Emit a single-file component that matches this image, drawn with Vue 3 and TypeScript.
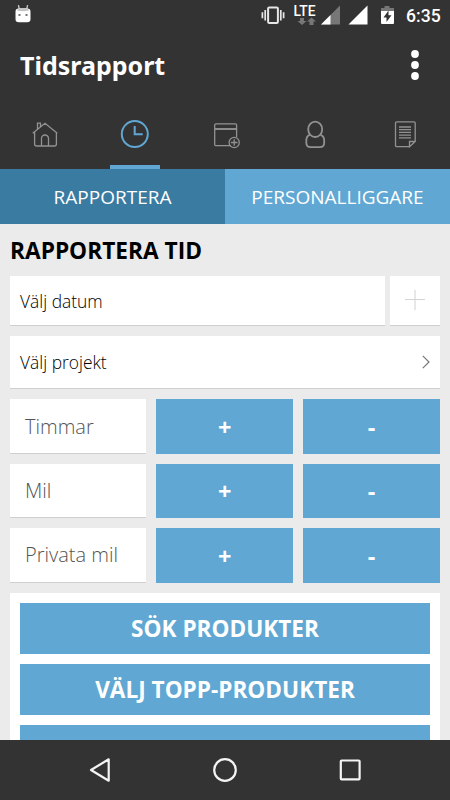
<script setup lang="ts">
import { ref } from 'vue'

interface Counter {
  label: string
}

const counters: Counter[] = [{ label: 'Timmar' }, { label: 'Mil' }, { label: 'Privata mil' }]
const segments: string[] = ['RAPPORTERA', 'PERSONALLIGGARE']
const activeSegment = ref(0)
</script>

<template>
  <div class="screen">
    <header class="top">
      <div class="status">
        <svg class="droid" width="16" height="20" viewBox="0 0 16 20">
          <path d="M3.4 1.2 4.3 5M12.6 1.2 11.7 5" stroke="#ccc" stroke-width="1.3" fill="none" />
          <rect x="0.5" y="4.5" width="15" height="13.7" rx="3.2" fill="#fff" />
          <path d="M2 6.5Q2.5 4 5 4h6q2.5 0 3 2.5Q8 8 2 6.5" fill="#c4c4c4" />
          <rect x="3.5" y="10" width="2" height="2" fill="#777" />
          <rect x="10.5" y="10" width="2" height="2" fill="#777" />
        </svg>
        <svg class="signals" width="136" height="22" viewBox="0 0 136 22">
          <g fill="none" stroke="#e6e6e6">
            <rect x="7.1" y="3.4" width="9.8" height="15.6" rx="1.2" stroke-width="2" />
            <path d="M4.2 6v10.5M19.8 6v10.5M1.4 8.2v6M22.6 8.2v6" stroke-width="1.7" />
          </g>
          <text class="lte" x="32.6" y="11.7">LTE</text>
          <path d="M38 14h4v3h2.5L40 21l-4.5-4H38zM47.5 21h4v-3.5H54L49.5 13.5 45 17.5h2.5z" fill="#777" transform="translate(1 0)" />
          <path d="M60 20.5 79 1.5v19z" fill="#777" />
          <path d="M60 20.5 69.5 11V20.5z" fill="#fff" />
          <path d="M87.5 20.5 106.5 1.5v19z" fill="#fff" />
          <path d="M120 7V4h3.500V2h5v2h4.500v3z" fill="#777" />
          <path d="M120 7h13v12q0 1-1 1h-11q-1 0-1-1z" fill="#fff" />
          <path d="M127.5 6.5 122.5 13.5h3V18l5-6.800h-3z" fill="#333" />
        </svg>
        <span class="time">6:35</span>
      </div>
      <div class="bar">
        <h1>Tidsrapport</h1>
        <svg class="more" width="10" height="32" viewBox="0 0 10 32" fill="#fff">
          <circle cx="5" cy="5" r="3.9" /><circle cx="5" cy="16" r="3.9" /><circle cx="5" cy="27" r="3.9" />
        </svg>
      </div>
      <nav class="tabs">
        <button>
          <svg width="30" height="30" viewBox="0 0 30 30">
            <path d="M2.700 13.200 15 3.300 27.300 13.200M4.600 12v12q0 2 2 2h17.800q2 0 2-2V12M7.500 9.300V3.200h3v3.600M11.500 26v-7.500a3.500 3.500 0 0 1 7 0V26" />
          </svg>
        </button>
        <button class="active">
          <svg width="30" height="30" viewBox="0 0 30 30">
            <circle cx="14.8" cy="14.1" r="13" /><path d="M14.700 6v8.200h8" />
          </svg>
        </button>
        <button>
          <svg width="30" height="30" viewBox="0 0 30 30">
            <path d="M20.500 25.700H6q-1.300 0-1.300-1.300V5q0-1.200 1.300-1.200h19.300q1.300 0 1.300 1.200v12.200" />
            <path d="M5 9h21.500" stroke-width="1.9" />
            <circle cx="24.2" cy="22.5" r="5.1" /><path d="M24.200 19.200v6.600M20.900 22.500h6.600" />
          </svg>
        </button>
        <button>
          <svg class="person" width="30" height="30" viewBox="0 0 30 30">
            <ellipse cx="15.2" cy="9.3" rx="7" ry="7.7" />
            <path d="M10 14.800C7.500 15.500 6.300 17.700 6.300 20.500v2.300Q6.300 27.200 10.700 27.200h9Q24.200 27.200 24.200 22.800v-2.300c0-2.800-1.300-5-3.700-5.700" />
          </svg>
        </button>
        <button>
          <svg width="30" height="30" viewBox="0 0 30 30">
            <path d="M19.500 26.700H6.700Q5.500 26.700 5.500 25.500V3Q5.500 1.800 6.700 1.800h17.300Q25.200 1.800 25.200 3v18.500L19.500 26.700v-5.200H25.200M9 7h12M9 9.700h12M9 12.400h12M9 15.100h12M9 17.800h12" />
          </svg>
        </button>
      </nav>
    </header>

    <div class="segments">
      <button v-for="(s, i) in segments" :key="s" :class="{ on: i === activeSegment }" @click="activeSegment = i">
        <span>{{ s }}</span>
      </button>
    </div>

    <main>
      <h2>RAPPORTERA TID</h2>
      <div class="date-row">
        <div class="field date">Välj datum</div>
        <button class="field add">
          <svg width="20" height="20" viewBox="0 0 20 20">
            <path d="M10 0v20" stroke="#e8e8e8" stroke-width="2" /><path d="M0 9.500h20" stroke="#d4d4d4" />
          </svg>
        </button>
      </div>
      <div class="field project">
        <span>Välj projekt</span>
        <svg width="8" height="14" viewBox="0 0 8 14" fill="none" stroke="#777" stroke-width="1.2">
          <path d="M.8.8 7 7 .8 13.200" />
        </svg>
      </div>
      <div class="counters">
        <template v-for="c in counters" :key="c.label">
          <div class="field hint">{{ c.label }}</div>
          <button class="blue step">+</button>
          <button class="blue step">-</button>
        </template>
      </div>
      <section class="panel">
        <button class="blue">SÖK PRODUKTER</button>
        <button class="blue">VÄLJ TOPP-PRODUKTER</button>
        <button class="blue"></button>
      </section>
    </main>

    <footer>
      <svg width="24" height="28" viewBox="0 0 24 28"><path d="M2 14 19.700 3.300v21.400z" /></svg>
      <svg width="26" height="28" viewBox="0 0 26 28"><circle cx="13" cy="14" r="10.8" /></svg>
      <svg width="24" height="28" viewBox="0 0 24 28"><rect x="2.8" y="4.5" width="18.8" height="18.8" rx=".8" /></svg>
    </footer>
  </div>
</template>

<style>
body {
  margin: 0;
  overflow: hidden;
}
</style>

<style scoped>
.screen {
  width: 450px;
  height: 800px;
  display: flex;
  flex-direction: column;
  overflow: hidden;
  background: #ebebeb;
  font-family: 'Open Sans', 'Noto Sans', sans-serif;
}
button {
  border: 0;
  padding: 0;
  margin: 0;
  background: none;
  font-family: inherit;
}
svg {
  display: block;
  flex: none;
}
.top {
  flex: 0 0 168.5px;
  background: #333;
  color: #fff;
}
.status {
  height: 30px;
  display: flex;
  align-items: flex-start;
  padding: 4px 9px 0 14.5px;
  box-sizing: border-box;
}
.signals {
  margin-left: auto;
}
.lte {
  font: 500 13.8px Roboto, sans-serif;
  fill: #fff;
}
.time {
  width: 35px;
  margin-left: 9px;
  font: 500 17.6px/24px Roboto, sans-serif;
}
.bar {
  height: 70px;
  display: flex;
  justify-content: space-between;
  align-items: center;
  padding: 0 30px 0 20px;
}
h1 {
  margin: 0;
  font: 700 25px/34px 'Noto Sans', sans-serif;
}
.tabs {
  height: 68.5px;
  display: grid;
  grid-template-columns: repeat(5, 1fr);
}
.tabs button {
  display: flex;
  justify-content: center;
  padding-top: 20px;
  box-sizing: border-box;
}
.tabs svg {
  fill: none;
  stroke: #929292;
  stroke-width: 1.3;
}
.tabs .person {
  stroke-width: 1.8;
}
.tabs .active {
  width: 50px;
  margin: 0 auto;
  border-bottom: 4px solid #60a8d3;
}
.tabs .active svg {
  stroke: #60a8d3;
  stroke-width: 2;
}
.segments {
  flex: 0 0 55.5px;
  display: grid;
  grid-template-columns: 1fr 1fr;
}
.segments button {
  background: #60a8d3;
  color: #fff;
  font-size: 19px;
  padding-top: 1px;
}
.segments .on {
  background: #397ba1;
}
main {
  flex: 1;
  min-height: 0;
  overflow: hidden;
  padding: 0 10px;
}
h2 {
  margin: 0;
  height: 51.5px;
  font-size: 22.7px;
  line-height: 53px;
  font-weight: 700;
  color: #000;
}
.field {
  background: #fff;
  box-sizing: border-box;
  border-bottom: 1.5px solid #cfcfcf;
  font-weight: 300;
  font-size: 17.4px;
  color: #000;
  display: flex;
  align-items: center;
}
.date-row {
  display: grid;
  grid-template-columns: 1fr 50px;
  gap: 5px;
  height: 50px;
}
.date,
.project {
  padding: 0 10px;
}
.date {
  padding-top: 2px;
}
.add {
  justify-content: center;
}
.project {
  height: 53.5px;
  margin-top: 10px;
  justify-content: space-between;
}
.counters {
  margin-top: 10.4px;
  display: grid;
  grid-template-columns: 136.4px 137px 137px;
  column-gap: 9.8px;
  grid-auto-rows: 54.4px;
  row-gap: 10px;
}
.hint {
  padding-left: 15px;
  font-size: 20px;
  color: #555;
}
.blue {
  background: #60a8d3;
  color: #fff;
  font-weight: 700;
  font-size: 22.6px;
}
.step {
  padding-top: 1px;
  font-size: 23.5px;
}
.panel {
  margin-top: 10px;
  padding: 10px;
  height: 200px;
  background: #fff;
  display: grid;
  grid-auto-rows: 51px;
  row-gap: 10.3px;
}
footer {
  flex: 0 0 60px;
  background: #333;
  display: flex;
  align-items: center;
  justify-content: center;
  gap: 99.5px;
}
footer svg {
  fill: none;
  stroke: #f4f4f4;
  stroke-width: 2.2;
  stroke-linejoin: round;
}
</style>
